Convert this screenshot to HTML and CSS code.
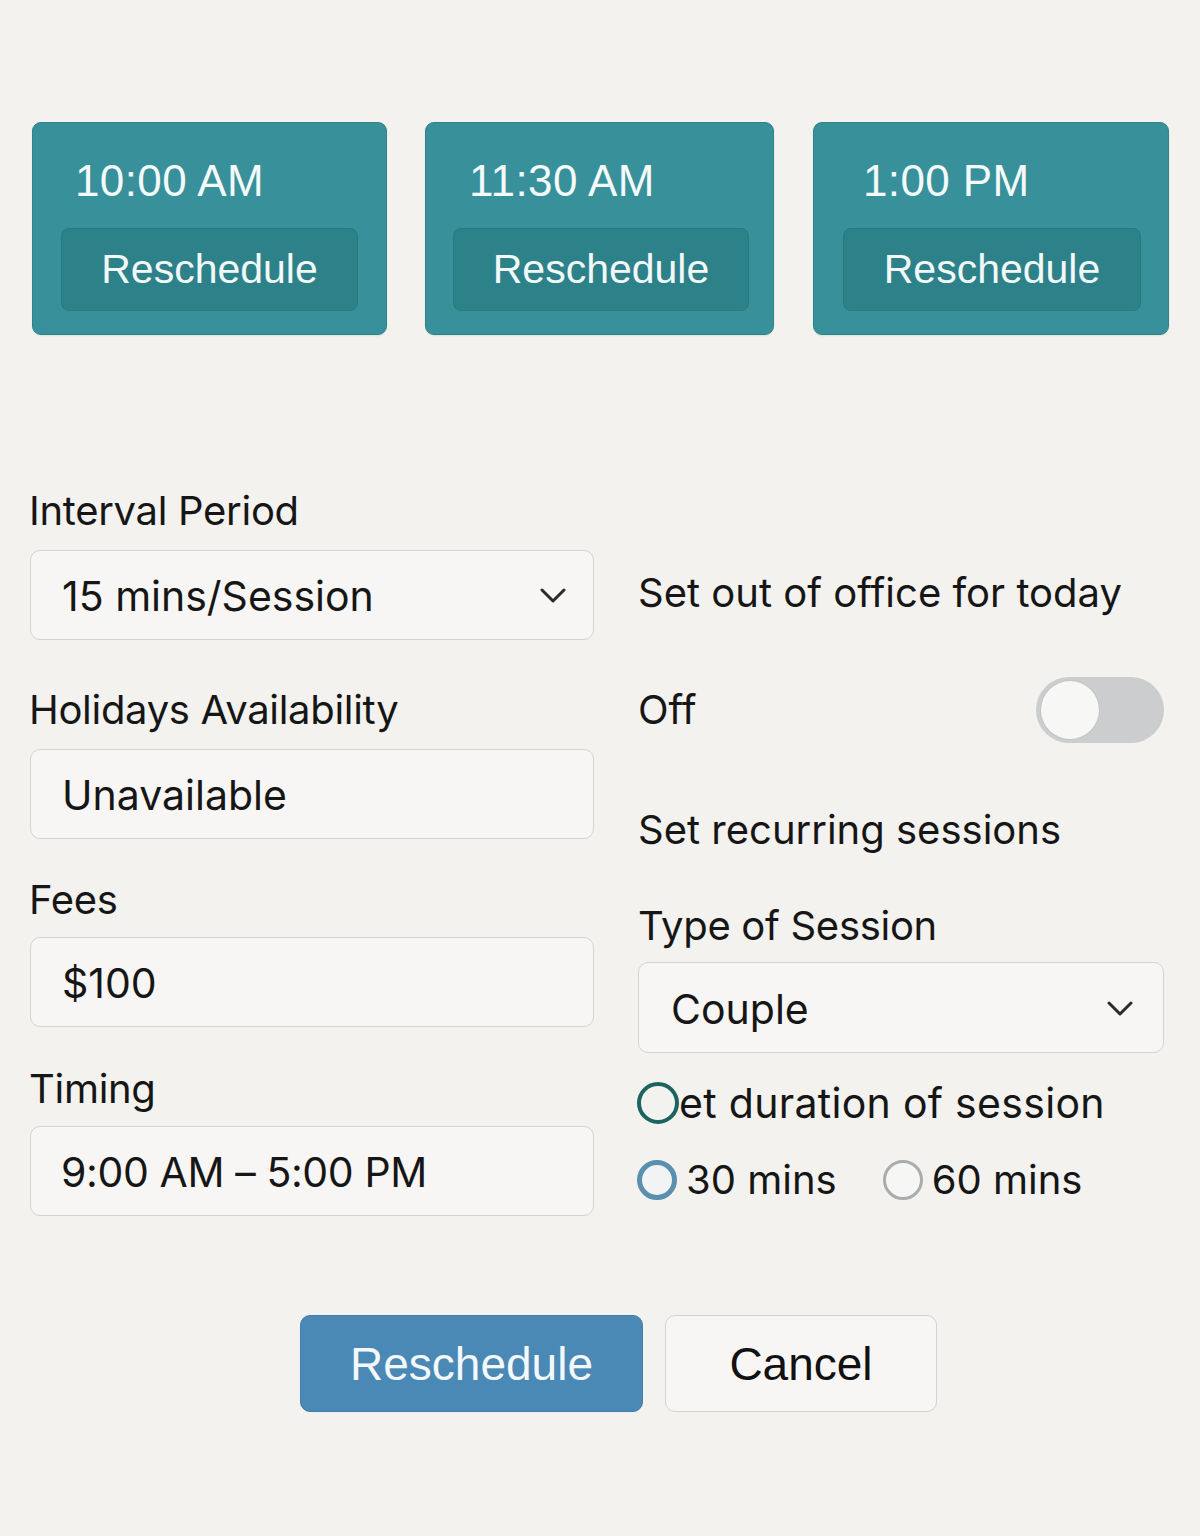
FILE: index.html
```html
<!DOCTYPE html>
<html lang="en">
<head>
<meta charset="utf-8">
<title>Reschedule</title>
<link rel="stylesheet" href="styles.css">
</head>
<body>
<div class="page">
  <div class="slots">
    <div class="slot slot-a">
      <div class="slot-time">10:00 AM</div>
      <button class="slot-btn">Reschedule</button>
    </div>
    <div class="slot slot-b">
      <div class="slot-time">11:30 AM</div>
      <button class="slot-btn">Reschedule</button>
    </div>
    <div class="slot slot-c">
      <div class="slot-time">1:00 PM</div>
      <button class="slot-btn">Reschedule</button>
    </div>
  </div>

  <div class="form">
    <div class="col col-left">
      <div class="field">
        <div class="label">Interval Period</div>
        <div class="box select">
          <span>15 mins/Session</span>
          <svg class="chev" width="26" height="16" viewBox="0 0 26 16"><path d="M2 2 L13 13 L24 2" fill="none" stroke="#2b2b2b" stroke-width="3" stroke-linecap="round" stroke-linejoin="round"/></svg>
        </div>
      </div>
      <div class="field field-wide">
        <div class="label">Holidays Availability</div>
        <div class="box"><span>Unavailable</span></div>
      </div>
      <div class="field field-tight">
        <div class="label">Fees</div>
        <div class="box"><span>$100</span></div>
      </div>
      <div class="field field-tight field-last">
        <div class="label">Timing</div>
        <div class="box"><span class="timing">9:00 AM – 5:00 PM</span></div>
      </div>
    </div>

    <div class="col col-right">
      <div class="text ooo">Set out of office for today</div>
      <div class="toggle-row">
        <span class="text">Off</span>
        <div class="toggle"><div class="knob"></div></div>
      </div>
      <div class="text recurring">Set recurring sessions</div>
      <div class="label type-label">Type of Session</div>
      <div class="box select select-right">
        <span>Couple</span>
        <svg class="chev" width="26" height="16" viewBox="0 0 26 16"><path d="M2 2 L13 13 L24 2" fill="none" stroke="#2b2b2b" stroke-width="3" stroke-linecap="round" stroke-linejoin="round"/></svg>
      </div>
      <div class="radio-row duration">
        <span class="radio radio-dark"></span><span class="text text-lg">et duration of session</span>
      </div>
      <div class="radio-row options">
        <span class="opt"><span class="radio radio-blue"></span><span class="text">30 mins</span></span>
        <span class="opt"><span class="radio radio-gray"></span><span class="text">60 mins</span></span>
      </div>
    </div>
  </div>

  <div class="actions">
    <button class="btn btn-primary">Reschedule</button>
    <button class="btn btn-secondary">Cancel</button>
  </div>
</div>
</body>
</html>
```

FILE: styles.css
```css
html, body {
  margin: 0;
  padding: 0;
  background: #f3f2ef;
}
body {
  width: 1200px;
  min-height: 1536px;
  font-family: "Inter", "Noto Sans", sans-serif;
  color: #161616;
}
.page {
  padding-top: 122px;
}

/* time slot cards */
.slots {
  display: flex;
  padding-left: 32px;
}
.slot {
  height: 213px;
  box-sizing: border-box;
  background: #37909a;
  border: 1px solid #2f838c;
  border-radius: 9px;
  padding: 28px 28px 0 28px;
  display: flex;
  flex-direction: column;
  box-shadow: 0 1px 2px rgba(0,0,0,0.08);
}
.slot-a { width: 355px; }
.slot-b { width: 349px; margin-left: 38px; padding-left: 27px; padding-right: 24px; }
.slot-c { width: 356px; margin-left: 39px; padding-left: 29px; padding-right: 27px; }
.slot-time {
  font-family: "Liberation Sans", Arial, sans-serif;
  font-size: 44px;
  line-height: 60px;
  color: #f4f9f9;
  padding-left: 14px;
  letter-spacing: 0.4px;
}
.slot-b .slot-time { padding-left: 16px; }
.slot-c .slot-time { padding-left: 20px; }
.slot-btn {
  margin-top: 17px;
  height: 83px;
  width: 100%;
  border: 1.5px solid #2a7880;
  border-radius: 8px;
  background: #2d8189;
  color: #f2f8f8;
  font-family: "Liberation Sans", Arial, sans-serif;
  font-size: 41px;
  padding: 0;
}

/* form */
.form {
  display: flex;
  margin-top: 151px;
  padding-left: 30px;
}
.col {
  display: flex;
  flex-direction: column;
}
.col-left {
  width: 564px;
}
.col-right {
  width: 526px;
  margin-left: 44px;
  padding-top: 82px;
}
.field {
  display: flex;
  flex-direction: column;
}
.field-wide { margin-top: 45px; }
.field-tight { margin-top: 36px; }
.field-last { margin-top: 37px; }
.field-tight .label { margin-bottom: 12px; }
.label, .text {
  font-size: 40px;
  line-height: 50px;
  color: #161616;
  white-space: nowrap;
}
.label {
  margin-bottom: 14px;
  letter-spacing: -0.3px;
  margin-left: -1px;
}
.text-lg {
  font-size: 41px;
  letter-spacing: 0.3px;
}
.box {
  height: 90px;
  box-sizing: border-box;
  background: #f7f6f4;
  border: 1.5px solid #d3d3d2;
  border-radius: 10px;
  display: flex;
  align-items: center;
  justify-content: space-between;
  padding: 2px 27px 0 31px;
  font-size: 41px;
  color: #161616;
}
.timing {
  letter-spacing: -0.4px;
  margin-left: -1px;
}
.select .chev { display: block; }

/* right column */
.toggle-row {
  margin-top: 59px;
  height: 66px;
  display: flex;
  align-items: center;
  justify-content: space-between;
}
.toggle {
  width: 128px;
  height: 66px;
  box-sizing: border-box;
  border-radius: 33px;
  background: #cbcdce;
  padding: 4px 5px;
  display: flex;
  align-items: center;
}
.knob {
  width: 58px;
  height: 58px;
  border-radius: 50%;
  background: #f7f7f6;
  box-shadow: 0 0 0 1px #c2c4c5;
}
.recurring { margin-top: 62px; }
.type-label { margin-top: 46px; margin-bottom: 11px; margin-left: 0; }
.select-right {
  height: 91px;
  padding-left: 32px;
  padding-right: 30px;
}
.radio-row {
  display: flex;
  align-items: center;
  height: 50px;
}
.duration { margin-top: 25px; margin-left: -1px; }
.options { margin-top: 27px; margin-left: -1px; }
.radio {
  display: inline-block;
  box-sizing: border-box;
  border-radius: 50%;
  flex: none;
}
.radio-dark {
  width: 42px;
  height: 42px;
  border: 4px solid #1c6460;
  background: transparent;
}
.opt {
  display: flex;
  align-items: center;
}
.opt + .opt { margin-left: 46px; }
.radio-blue {
  width: 40px;
  height: 40px;
  border: 5px solid #5a8fae;
  background: #f1f3f4;
  margin-right: 9px;
}
.radio-gray {
  width: 40px;
  height: 40px;
  border: 3px solid #a9adae;
  background: #f6f6f5;
  margin-right: 9px;
}

/* actions */
.actions {
  display: flex;
  margin-top: 99px;
  padding-left: 300px;
}
.btn {
  height: 97px;
  box-sizing: border-box;
  border-radius: 10px;
  font-family: "Liberation Sans", Arial, sans-serif;
  font-size: 46px;
  padding: 0;
}
.btn-primary {
  width: 343px;
  background: #4a88b5;
  border: 1px solid #437fab;
  color: #f4f8fb;
}
.btn-secondary {
  width: 272px;
  margin-left: 22px;
  background: #f7f6f4;
  border: 1.5px solid #d2d2d1;
  color: #111;
}
```
